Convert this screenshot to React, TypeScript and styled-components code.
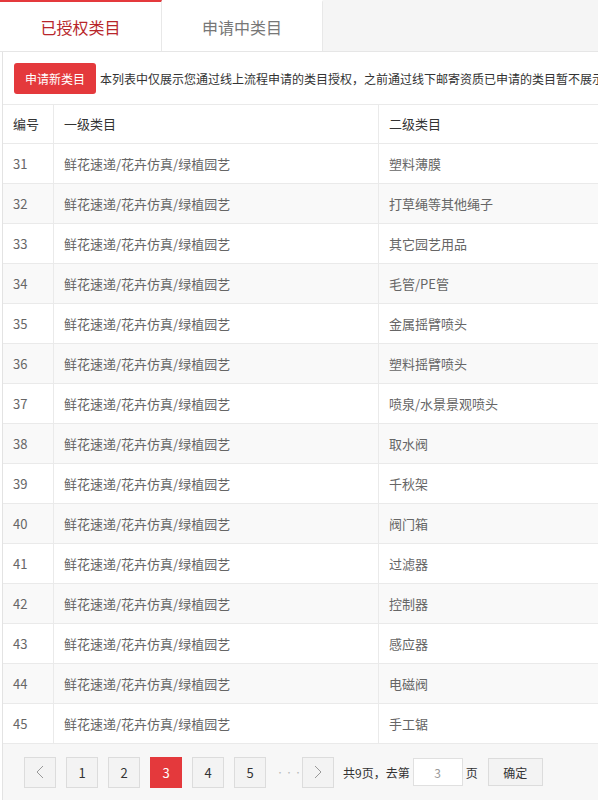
import React from "react";
import styled, { createGlobalStyle } from "styled-components";

const GlobalStyle = createGlobalStyle`
  html, body {
    margin: 0;
    padding: 0;
    background: #fff;
    overflow: hidden;
  }
  body {
    font-family: "Noto Sans CJK SC", "Noto Sans", "Liberation Sans", sans-serif;
    color: #666;
  }
`;

const Page = styled.div`
  width: 598px;
  overflow: hidden;
`;

const TabBar = styled.div`
  display: flex;
  height: 51px;
  background: #f5f5f5;
  border-bottom: 1px solid #e6e6e6;
  width: 900px;
`;

const Tab = styled.div<{ $active?: boolean }>`
  box-sizing: border-box;
  width: ${(p) => (p.$active ? "162px" : "161px")};
  display: flex;
  align-items: center;
  justify-content: center;
  background: #fff;
  font-size: 16px;
  color: ${(p) => (p.$active ? "#b8262b" : "#777")};
  border-top: 2px solid ${(p) => (p.$active ? "#e4393c" : "#fff")};
  border-right: 1px solid #e8e8e8;
  cursor: pointer;
`;

const Panel = styled.div`
  margin-left: 2px;
  border-left: 1px solid #e3e3e3;
  width: 900px;
`;

const Toolbar = styled.div`
  box-sizing: border-box;
  height: 53px;
  display: flex;
  align-items: center;
  gap: 4px;
  padding-left: 11px;
  border-bottom: 1px solid #eaeaea;
  white-space: nowrap;
`;

const RedButton = styled.button`
  height: 31px;
  padding: 0 11px;
  background: #e4393c;
  color: #fff;
  border: none;
  border-radius: 3px;
  font-family: inherit;
  font-size: 12px;
  cursor: pointer;
`;

const Notice = styled.span`
  font-size: 12px;
  color: #333;
`;

const Table = styled.table`
  width: 100%;
  border-collapse: separate;
  border-spacing: 0;
  table-layout: fixed;
`;

const Th = styled.th<{ $w?: number }>`
  width: ${(p) => (p.$w ? `${p.$w}px` : "auto")};
  padding: 0 0 0 10px;
  height: 38px;
  line-height: 38px;
  text-align: left;
  font-size: 13px;
  font-weight: normal;
  color: #333;
  border-bottom: 1px solid #eaeaea;
  border-right: 1px solid #eaeaea;
`;

const Tr = styled.tr<{ $alt?: boolean }>`
  background: ${(p) => (p.$alt ? "#f9f9f9" : "#fff")};
`;

const Td = styled.td`
  padding: 0 0 0 10px;
  height: 39px;
  line-height: 39px;
  font-size: 13px;
  color: #666;
  white-space: nowrap;
  border-bottom: 1px solid #eaeaea;
  border-right: 1px solid #eaeaea;
`;

const Pager = styled.div`
  display: flex;
  align-items: center;
  gap: 10px;
  height: 56px;
  padding: 0 0 0 21px;
  background: #f7f7f7;
  font-size: 12px;
  color: #333;
`;

const PageBtn = styled.div<{ $active?: boolean }>`
  box-sizing: border-box;
  width: 32px;
  height: 31px;
  display: flex;
  align-items: center;
  justify-content: center;
  font-size: 13px;
  color: ${(p) => (p.$active ? "#fff" : "#333")};
  background: ${(p) => (p.$active ? "#e4393c" : "#f3f3f3")};
  border: 1px solid ${(p) => (p.$active ? "#e4393c" : "#dcdcdc")};
  cursor: pointer;
`;

const Dots = styled.span`
  width: 16px;
  text-align: center;
  color: #bbb;
  font-size: 8px;
  letter-spacing: 1px;
  white-space: nowrap;
`;

const JumpText = styled.span`
  display: flex;
  align-items: center;
  gap: 3px;
  margin-left: -1px;
`;

const PageInput = styled.input`
  box-sizing: border-box;
  width: 50px;
  height: 28px;
  border: 1px solid #e0e0e0;
  background: #fff;
  text-align: center;
  font-family: inherit;
  font-size: 12px;
  color: #999;
  outline: none;
`;

const OkButton = styled.button`
  box-sizing: border-box;
  width: 55px;
  height: 28px;
  border: 1px solid #dcdcdc;
  background: #f3f3f3;
  font-family: inherit;
  font-size: 12px;
  color: #333;
  cursor: pointer;
`;

const Chevron: React.FC<{ dir: "left" | "right" }> = ({ dir }) => (
  <svg width="8" height="14" viewBox="0 0 8 14">
    <path
      d={dir === "left" ? "M7 1 L1 7 L7 13" : "M1 1 L7 7 L1 13"}
      fill="none"
      stroke="#999"
      strokeWidth="1"
    />
  </svg>
);

const rows: [number, string][] = [
  [31, "塑料薄膜"],
  [32, "打草绳等其他绳子"],
  [33, "其它园艺用品"],
  [34, "毛管/PE管"],
  [35, "金属摇臂喷头"],
  [36, "塑料摇臂喷头"],
  [37, "喷泉/水景景观喷头"],
  [38, "取水阀"],
  [39, "千秋架"],
  [40, "阀门箱"],
  [41, "过滤器"],
  [42, "控制器"],
  [43, "感应器"],
  [44, "电磁阀"],
  [45, "手工锯"],
];

const App: React.FC = () => {
  return (
    <Page>
      <GlobalStyle />
      <TabBar>
        <Tab $active>已授权类目</Tab>
        <Tab>申请中类目</Tab>
      </TabBar>
      <Panel>
        <Toolbar>
          <RedButton>申请新类目</RedButton>
          <Notice>
            本列表中仅展示您通过线上流程申请的类目授权，之前通过线下邮寄资质已申请的类目暂不展示
          </Notice>
        </Toolbar>
        <Table>
          <thead>
            <tr>
              <Th $w={40}>编号</Th>
              <Th $w={314}>一级类目</Th>
              <Th>二级类目</Th>
            </tr>
          </thead>
          <tbody>
            {rows.map(([id, name], i) => (
              <Tr key={id} $alt={i % 2 === 1}>
                <Td>{id}</Td>
                <Td>鲜花速递/花卉仿真/绿植园艺</Td>
                <Td>{name}</Td>
              </Tr>
            ))}
          </tbody>
        </Table>
        <Pager>
          <PageBtn>
            <Chevron dir="left" />
          </PageBtn>
          {[1, 2, 3, 4, 5].map((n) => (
            <PageBtn key={n} $active={n === 3}>
              {n}
            </PageBtn>
          ))}
          <Dots>···</Dots>
          <PageBtn>
            <Chevron dir="right" />
          </PageBtn>
          <JumpText>
            共9页，去第
            <PageInput defaultValue="3" />
            页
          </JumpText>
          <OkButton>确定</OkButton>
        </Pager>
      </Panel>
    </Page>
  );
};

export default App;
